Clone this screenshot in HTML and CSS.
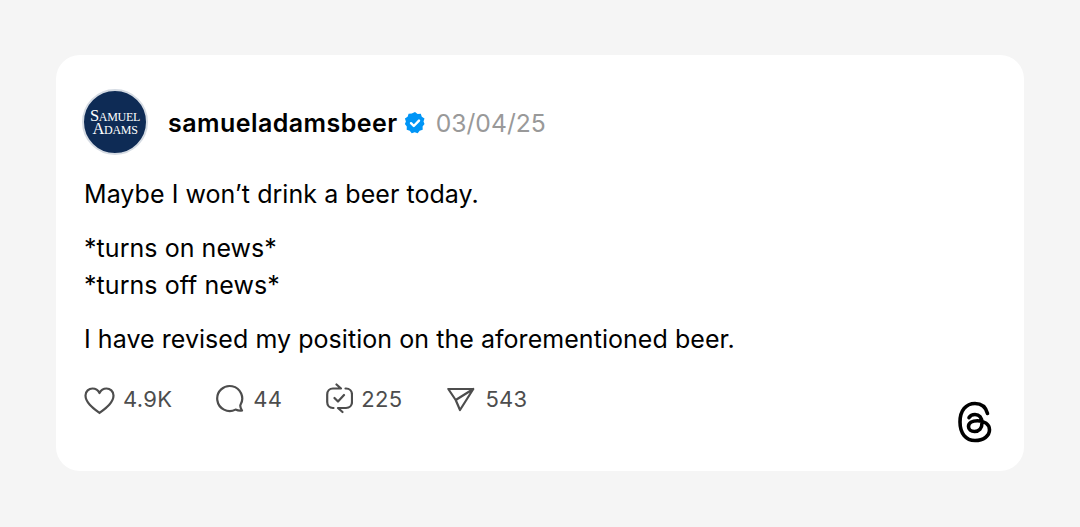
FILE: index.html
```html
<!DOCTYPE html>
<html lang="en">
<head>
<meta charset="utf-8">
<title>Threads post</title>
<link rel="stylesheet" href="styles.css">
</head>
<body>
<main class="card">
  <header class="head">
    <div class="avatar"><span class="logo-line">Samuel</span><span class="logo-line">Adams</span></div>
    <span class="name">samueladamsbeer</span>
    <svg class="badge" viewBox="0 0 24 24" width="24" height="24" aria-hidden="true">
      <path fill="#0095f6" d="M12 1l2.600 1.900 3.200-.2 1 3 2.700 1.800-1 3 1 2.500-1.900 2.600.1 3.200-3.100.9-1.900 2.600-3-1.100-3 1.100-1.900-2.600-3.100-.9.1-3.200-1.900-2.600 1-2.500-1-3 2.700-1.800 1-3 3.200-.2z"/>
      <path fill="none" stroke="#fff" stroke-width="2.400" stroke-linecap="round" stroke-linejoin="round" d="M8 12.200l2.800 2.800 5.200-5.400"/>
    </svg>
    <span class="date">03/04/25</span>
  </header>
  <div class="body">
    <p>Maybe I won’t drink a beer today.</p>
    <p>*turns on news*<br>*turns off news*</p>
    <p>I have revised my position on the aforementioned beer.</p>
  </div>
  <footer class="stats">
    <div class="stat">
      <svg class="icon" viewBox="0 0 31 32" width="31" height="32" aria-hidden="true"><path d="M15.500 30C9 25 1.500 19.500 1.500 12.500 1.500 8 5 5.500 8.500 5.500c3 0 5.500 1.500 7 4.500 1.500-3 4-4.500 7-4.500 3.500 0 7 2.500 7 7C29.500 19.500 22 25 15.500 30z"/></svg>
      <span>4.9K</span>
    </div>
    <div class="stat">
      <svg class="icon" viewBox="0 0 29 32" width="29" height="32" aria-hidden="true"><path d="M19.500 26.600A12.500 12.500 0 1 1 24.400 22c-.4 2 .6 4 1.600 5.500-2 .5-4.500 0-6.500-.9z"/></svg>
      <span>44</span>
    </div>
    <div class="stat">
      <svg class="icon" viewBox="0 0 27 32" width="27" height="32" aria-hidden="true"><path d="M7.500 25H7c-3.500 0-5.800-2.500-5.800-6v-7.500c0-3.500 2.300-6 5.800-6h8L10.500 1.500M19.500 5.500h.5c3.500 0 6 2.500 6 6V19c0 3.500-2.500 6-6 6h-8l4.500 4M8.500 15l3.500 3.500 6-6.500"/></svg>
      <span>225</span>
    </div>
    <div class="stat">
      <svg class="icon" viewBox="0 0 31 32" width="31" height="32" aria-hidden="true"><path d="M2.300 6h25L14 27 9.700 17zM9.700 17 27.300 6"/></svg>
      <span>543</span>
    </div>
  </footer>
  <svg class="threads" viewBox="0 0 36 42" width="36" height="42" aria-hidden="true">
    <path d="M30.500 12.500C28.800 6 24.500 2.500 18 2.500 9 2.500 3 9.500 3 21s6 18.500 15 18.500c8.500 0 14.500-4.600 14.500-10.700 0-5.800-5.300-9-12-9-5.500 0-9 2.300-9 5.700 0 3 2.700 5 6 5 4.500 0 7.500-3 7.500-8.500 0-5.500-2.800-8.500-7-8.500-2.800 0-4.800 1.100-6 3.200"/>
  </svg>
</main>
</body>
</html>
```
FILE: styles.css
```css
* { box-sizing: border-box; }
html, body { margin: 0; height: 100%; }
body {
  background: #f5f5f5;
  font-family: Inter, "Liberation Sans", sans-serif;
  color: #000;
  padding: 55px 56px 56px;
  overflow: hidden;
}
.card {
  position: relative;
  background: #fff;
  border-radius: 24px;
  height: 416px;
  padding: 34px 28px 0 28px;
}
.head { display: flex; align-items: center; height: 66px; margin-left: -2px; }
.avatar {
  width: 66px; height: 66px; border-radius: 50%;
  background: #0e2b55;
  border: 2px solid #d5dbe3;
  color: #fff;
  display: flex; flex-direction: column; align-items: center; justify-content: center;
  font-family: "Liberation Serif", serif;
  font-variant: small-caps;
  font-size: 16.500px; line-height: 13px;
  letter-spacing: -0.3px;
  flex: none;
}
.logo-line { display: block; }
.name { margin-left: 20px; font-size: 25px; font-weight: 600; letter-spacing: 0.45px; position: relative; top: 1px; }
.badge { margin-left: 5px; flex: none; position: relative; top: 1px; }
.date { margin-left: 9px; font-size: 24.700px; color: #999; position: relative; top: 1px; }
.body { margin-top: 21px; font-size: 25px; line-height: 37px; letter-spacing: 0.05px; }
.body p { margin: 0 0 17px; }
.stats { display: flex; align-items: center; gap: 44px; margin-top: 25px; color: #4d4d4d; font-size: 22px; letter-spacing: 0.3px; }
.stat { display: flex; align-items: center; gap: 8px; }
.icon { fill: none; stroke: #4d4d4d; stroke-width: 2.200; stroke-linecap: round; stroke-linejoin: round; flex: none; }
.threads {
  position: absolute; right: 31px; bottom: 28px;
  fill: none; stroke: #000; stroke-width: 3.600; stroke-linecap: round;
}
```
